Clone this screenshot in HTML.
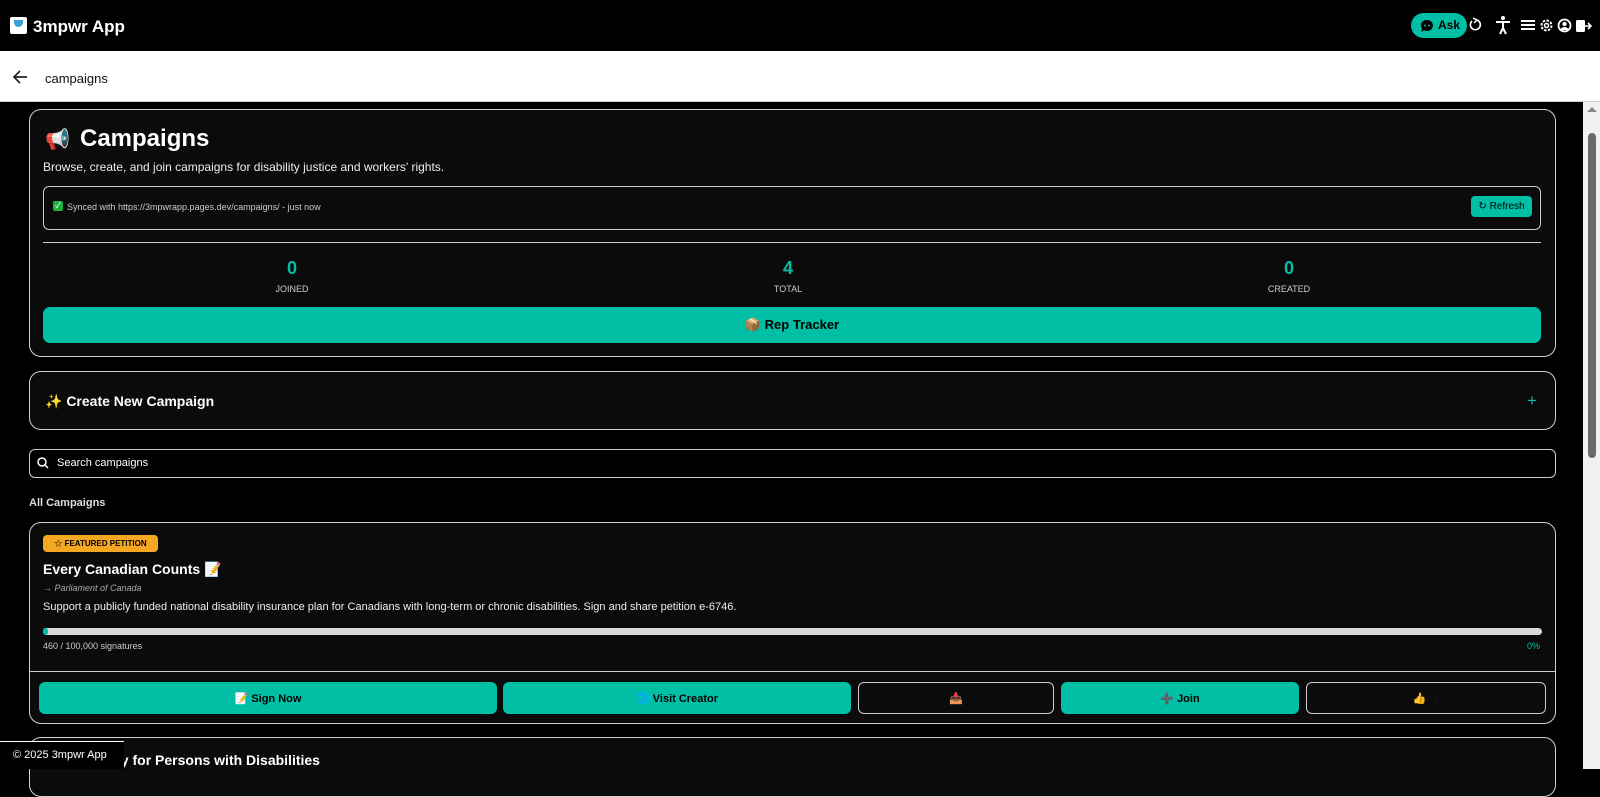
<!DOCTYPE html>
<html><head><meta charset="utf-8"><style>
*{box-sizing:border-box;margin:0;padding:0}
body{width:1600px;height:769px;overflow:hidden;background:#000;font-family:"Liberation Sans","Noto Sans CJK SC",sans-serif;color:#fff;position:relative}
.a{position:absolute}
.card{position:absolute;left:29px;width:1527px;background:#0b0b0b;border:1px solid #d0d0d0;border-radius:12px}
.teal{background:#00bfa5}
.btn{position:absolute;top:682px;height:32px;border-radius:6px;font-size:11px;font-weight:bold;display:flex;align-items:center;justify-content:center;color:#000}
.ob{border:1px solid #ccc;background:#0b0b0b}
.stat{position:absolute;width:200px;text-align:center}
.stat b{display:block;color:#00bfa5;font-size:18px;line-height:20px}
.stat span{display:block;color:#ccc;font-size:9px;margin-top:6px}
</style></head><body>
<div class="a" style="left:0;top:0;width:1600px;height:51px;background:#000"></div>
<div class="a" style="left:10px;top:17px;width:17px;height:17px;background:#fff;border-radius:2px"><div style="margin:3px auto;width:9px;height:7px;background:#3aa0d8;border-radius:0 0 5px 5px"></div></div>
<div class="a" style="left:33px;top:17px;font-size:17px;font-weight:bold">3mpwr App</div>
<div class="a teal" style="left:1411px;top:13px;width:56px;height:25px;border-radius:13px;color:#000;font-weight:bold;font-size:12px;line-height:25px;padding-left:27px"><svg style="position:absolute;left:9px;top:6px" width="14" height="14" viewBox="0 0 14 14"><path d="M7 1a6 5.5 0 1 1-3 10.3L1 13l1-3.3A6 5.5 0 0 1 7 1z" fill="#000"/><circle cx="5" cy="6.5" r="1" fill="#00bfa5"/><circle cx="9" cy="6.5" r="1" fill="#00bfa5"/></svg>Ask</div>
<svg class="a" style="left:1468px;top:17px" width="14" height="16" viewBox="0 0 14 16"><path d="M4 4A5 5 0 1 0 9 3" fill="none" stroke="#fff" stroke-width="1.6"/><path d="M5 1l4 2-3 3" fill="none" stroke="#fff" stroke-width="1.5"/></svg>
<svg class="a" style="left:1495px;top:15px" width="16" height="20" viewBox="0 0 16 20"><circle cx="8" cy="3" r="2" fill="#fff"/><path d="M1 7h14M8 7v6M8 13l-3 6M8 13l3 6" stroke="#fff" stroke-width="2" fill="none"/></svg>
<svg class="a" style="left:1521px;top:19px" width="14" height="12"><path d="M0 2h14M0 6h14M0 10h14" stroke="#fff" stroke-width="2"/></svg>
<svg class="a" style="left:1539px;top:18px" width="15" height="15" viewBox="0 0 15 15"><circle cx="7.5" cy="7.5" r="5" fill="none" stroke="#fff" stroke-width="2" stroke-dasharray="2.5 1.4"/><circle cx="7.5" cy="7.5" r="2" fill="none" stroke="#fff" stroke-width="1.5"/></svg>
<svg class="a" style="left:1557px;top:18px" width="15" height="15" viewBox="0 0 15 15"><circle cx="7.5" cy="7.5" r="6" fill="none" stroke="#fff" stroke-width="1.8"/><circle cx="7.5" cy="6" r="2.2" fill="#fff"/><path d="M3.5 12a4 3 0 0 1 8 0" fill="#fff"/></svg>
<svg class="a" style="left:1576px;top:19px" width="16" height="14" viewBox="0 0 16 14"><rect x="0" y="1" width="9" height="12" rx="1.5" fill="#fff"/><path d="M9 7h6M12 4l3 3-3 3" stroke="#fff" stroke-width="1.6" fill="none"/></svg>
<div class="a" style="left:0;top:51px;width:1600px;height:51px;background:#fff;border-bottom:1px solid #ccc"></div>
<svg class="a" style="left:13px;top:70px" width="15" height="14" viewBox="0 0 15 14"><path d="M14 7H2M7 1L1 7l6 6" stroke="#222" stroke-width="1.7" fill="none"/></svg>
<div class="a" style="left:45px;top:71px;font-size:13px;color:#111">campaigns</div>
<div class="a" style="left:1583px;top:102px;width:17px;height:667px;background:#f1f1f1"></div>
<div class="a" style="left:1588px;top:133px;width:8px;height:325px;background:#6b6b6b;border-radius:4px"></div>
<div class="a" style="left:1587px;top:107px;width:0;height:0;border:5px solid transparent;border-bottom:5px solid #888;border-top:0"></div>

<div class="card" style="top:109px;height:248px"></div>
<div class="a" style="left:45px;top:127px;font-size:20px">📢</div>
<div class="a" style="left:80px;top:125px;font-size:24px;font-weight:bold">Campaigns</div>
<div class="a" style="left:43px;top:160px;font-size:12px;color:#eee">Browse, create, and join campaigns for disability justice and workers' rights.</div>
<div class="a" style="left:43px;top:186px;width:1498px;height:44px;border:1px solid #ccc;border-radius:6px"></div>
<div class="a" style="left:53px;top:201px;width:10px;height:10px;background:#1fb141;border-radius:2px;font-size:8px;line-height:10px;text-align:center">✓</div>
<div class="a" style="left:67px;top:202px;font-size:9px;color:#ccc">Synced with https://3mpwrapp.pages.dev/campaigns/ - just now</div>
<div class="a teal" style="left:1471px;top:196px;width:61px;height:21px;border-radius:4px;color:#000;font-size:10px;text-align:center;line-height:21px">↻ Refresh</div>
<div class="a" style="left:43px;top:242px;width:1498px;height:1px;background:#ccc"></div>
<div class="stat" style="left:192px;top:258px"><b>0</b><span>JOINED</span></div>
<div class="stat" style="left:688px;top:258px"><b>4</b><span>TOTAL</span></div>
<div class="stat" style="left:1189px;top:258px"><b>0</b><span>CREATED</span></div>
<div class="a teal" style="left:43px;top:307px;width:1498px;height:36px;border-radius:7px;color:#000;font-size:13px;font-weight:bold;text-align:center;line-height:36px">📦 Rep Tracker</div>

<div class="card" style="top:371px;height:59px"></div>
<div class="a" style="left:45px;top:393px;font-size:14px;font-weight:bold">✨ Create New Campaign</div>
<div class="a" style="left:1527px;top:391px;font-size:17px;color:#00bfa5">+</div>

<div class="a" style="left:29px;top:449px;width:1527px;height:29px;border:1px solid #ccc;border-radius:6px;background:#000"></div>
<svg class="a" style="left:37px;top:457px" width="12" height="12" viewBox="0 0 12 12"><circle cx="5" cy="5" r="4" stroke="#fff" stroke-width="1.5" fill="none"/><path d="M8 8l3 3" stroke="#fff" stroke-width="1.5"/></svg>
<div class="a" style="left:57px;top:457px;font-size:11px">Search campaigns</div>
<div class="a" style="left:29px;top:497px;font-size:11px;font-weight:bold;color:#ddd">All Campaigns</div>

<div class="card" style="top:522px;height:202px"></div>
<div class="a" style="left:43px;top:535px;width:115px;height:17px;background:#f5a623;border-radius:4px;color:#000;font-size:8px;font-weight:bold;line-height:17px;text-align:center">☆ FEATURED PETITION</div>
<div class="a" style="left:43px;top:561px;font-size:14px;font-weight:bold">Every Canadian Counts 📝</div>
<div class="a" style="left:43px;top:583px;font-size:9px;font-style:italic;color:#aaa">→ Parliament of Canada</div>
<div class="a" style="left:43px;top:601px;font-size:11px;color:#eee">Support a publicly funded national disability insurance plan for Canadians with long-term or chronic disabilities. Sign and share petition e-6746.</div>
<div class="a" style="left:43px;top:628px;width:1499px;height:7px;background:#d9d9d9;border-radius:4px"><div style="width:5px;height:7px;background:#00bfa5;border-radius:4px"></div></div>
<div class="a" style="left:43px;top:641px;font-size:9px;color:#ccc">460 / 100,000 signatures</div>
<div class="a" style="left:1527px;top:641px;font-size:9px;color:#00bfa5">0%</div>
<div class="a" style="left:29px;top:671px;width:1527px;height:1px;background:#ccc"></div>
<div class="btn teal" style="left:39px;width:458px">📝 Sign Now</div>
<div class="btn teal" style="left:503px;width:348px">🌐 Visit Creator</div>
<div class="btn ob" style="left:858px;width:196px">📥</div>
<div class="btn teal" style="left:1061px;width:238px">➕ Join</div>
<div class="btn ob" style="left:1306px;width:240px">👍 <span style="color:#111">+1</span></div>

<div class="card" style="top:737px;height:60px"></div>
<div class="a" style="left:43px;top:752px;font-size:14px;font-weight:bold">Zero Poverty for Persons with Disabilities</div>
<div class="a" style="left:0;top:741px;width:124px;height:28px;background:#000;border-top:1px solid #fff;font-size:11px;color:#fff;line-height:26px;padding-left:13px">© 2025 3mpwr App</div>
</body></html>
